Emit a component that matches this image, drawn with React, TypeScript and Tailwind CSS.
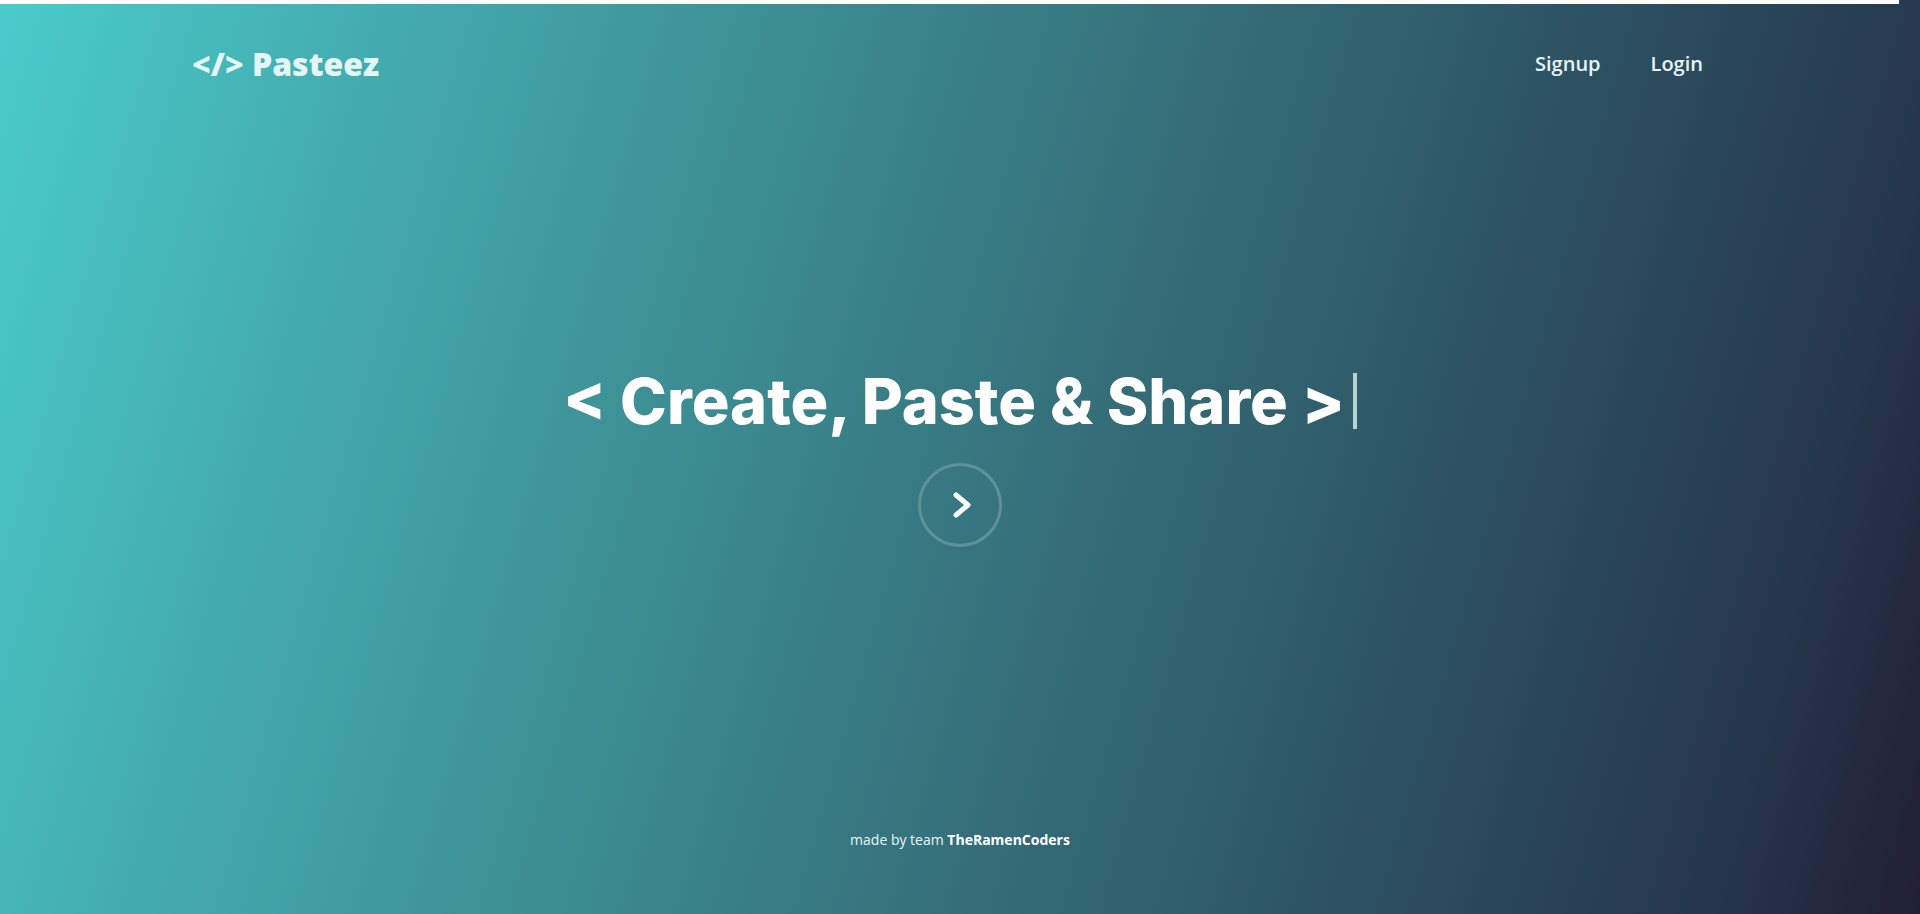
import { useState } from "react";

const navLinks = [
  { label: "Signup", href: "#signup" },
  { label: "Login", href: "#login" },
];

function ProgressBar() {
  return (
    <div className="absolute inset-x-0 top-0 h-1">
      <div className="h-full w-[98.9%] bg-[#fdfefb]" />
    </div>
  );
}

function Header() {
  return (
    <header className="flex h-32 items-center justify-between px-[10%]">
      <a
        href="#home"
        className="font-['Open_Sans',sans-serif] text-[32px] leading-10 font-extrabold text-[#e4f7f7]"
      >
        &lt;/&gt; Pasteez
      </a>
      <nav className="flex">
        {navLinks.map((link) => (
          <a
            key={link.label}
            href={link.href}
            className="px-[25px] font-['Open_Sans',sans-serif] text-xl font-semibold text-[#e8f4f8]"
          >
            {link.label}
          </a>
        ))}
      </nav>
    </header>
  );
}

export default function App() {
  const [started, setStarted] = useState(false);

  return (
    <div className="relative flex min-h-screen flex-col bg-[linear-gradient(106deg,#4acbcb_0%,#45b2b5_14%,#3a838a_43%,#26384e_89%,#211f35_100%)]">
      <ProgressBar />
      <Header />

      <main className="flex flex-1 flex-col items-center justify-center pb-10">
        <h1 className="flex items-center font-['Inter',sans-serif] text-[63px] leading-[60px] font-extrabold text-white">
          &lt; Create, Paste &amp; Share &gt;
          <span className="ml-2 h-14 w-1 bg-[#b9d3d3]" />
        </h1>
        <button
          type="button"
          aria-label="Get started"
          aria-pressed={started}
          onClick={() => setStarted(!started)}
          className="mt-8 flex size-[84px] items-center justify-center rounded-full border-3 border-[#5d929c]"
        >
          <svg width="24" height="32" viewBox="0 0 24 32" fill="none">
            <path
              d="M8 6L20 16L8 26"
              stroke="white"
              strokeWidth="5"
              strokeLinecap="round"
              strokeLinejoin="round"
            />
          </svg>
        </button>
      </main>

      <footer className="pb-16 text-center font-['Open_Sans',sans-serif] text-sm text-[#e8f6f8]">
        made by team <b className="font-bold text-white">TheRamenCoders</b>
      </footer>
    </div>
  );
}
